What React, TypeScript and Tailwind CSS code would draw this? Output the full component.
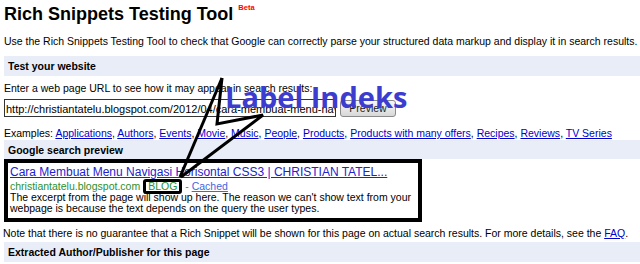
import React from 'react';

const examples = [
  'Applications',
  'Authors',
  'Events',
  'Movie',
  'Music',
  'People',
  'Products',
  'Products with many offers',
  'Recipes',
  'Reviews',
  'TV Series',
];

function SectionHeader({ children, className = '' }: { children: React.ReactNode; className?: string }) {
  return (
    <div className={`ml-[4px] h-[20px] bg-[#e8edf8] pl-[4px] text-[10.5px] font-bold leading-[20px] text-black ${className}`}>
      {children}
    </div>
  );
}

export default function App() {
  return (
    <div className="relative h-[264px] w-[640px] overflow-hidden bg-white font-['Liberation_Sans',Arial,sans-serif] text-black">
      <div className="h-[34px] pl-[4px] pt-[2px] text-[18px] font-bold leading-[24px]">
        Rich Snippets Testing Tool
        <span className="ml-[5px] align-top text-[7.5px] font-bold leading-[12px] text-[#ff0000]">Beta</span>
      </div>
      <div className="h-[14px] whitespace-nowrap pl-[4px] text-[10.5px] leading-[14px]">
        Use the Rich Snippets Testing Tool to check that Google can correctly parse your structured data markup and
        display it in search results.
      </div>

      <SectionHeader className="mt-[8px]">Test your website</SectionHeader>

      <div className="mt-[5px] h-[14px] pl-[4px] text-[10.5px] leading-[14px]">
        Enter a web page URL to see how it may appear in search results:
      </div>

      <div className="mt-[4px] flex h-[18px] items-start gap-[4px] pl-[4px]">
        <div className="h-[18px] w-[332px] overflow-hidden whitespace-nowrap border border-[#333] pl-[1px] pt-[2px] text-[11px] leading-[14px]">
          http://christiantatelu.blogspot.com/2012/04/cara-membuat-menu-navigasi-horisontal-css3.html
        </div>
        <div className="mt-[1px] h-[17px] w-[56px] rounded-[3px] border border-[#8a8a8a] bg-linear-to-b from-[#f8f8f8] to-[#d8d8d8] text-center text-[10.5px] leading-[15px] text-[#222]">
          Preview
        </div>
      </div>

      <div className="mt-[10px] h-[13px] whitespace-nowrap pl-[4px] text-[10.5px] leading-[13px]">
        Examples:{' '}
        {examples.map((ex, i) => (
          <React.Fragment key={ex}>
            <span className="text-[#0000cc] underline">{ex}</span>
            {i < examples.length - 1 && ', '}
          </React.Fragment>
        ))}
      </div>

      <SectionHeader className="!h-[19px]">Google search preview</SectionHeader>

      <div className="ml-[4px] h-[63px] w-[418px] border-[4px] border-black pl-[2px] pt-[2px]">
        <div className="h-[15px] whitespace-nowrap text-[12px] leading-[15px] text-[#2222cc] underline">
          Cara Membuat Menu Navigasi Horisontal CSS3 | CHRISTIAN TATEL...
        </div>
        <div className="flex h-[12px] items-start whitespace-nowrap text-[10.5px] leading-[12px]">
          <span className="text-[#2d8f2d]">christiantatelu.blogspot.com</span>
          <span className="ml-[3px] -mt-[1px] inline-block h-[15px] rounded-[3px] border-[3px] border-black px-[2px] leading-[9px] text-[#2d8f2d]">
            BLOG
          </span>
          <span className="text-[#777]">&nbsp;-&nbsp;</span>
          <span className="text-[#4466dd] underline">Cached</span>
        </div>
        <div className="text-[10.5px] leading-[11px]">
          The excerpt from the page will show up here. The reason we can't show text from your
          <br />
          webpage is because the text depends on the query the user types.
        </div>
      </div>

      <div className="mt-[4px] h-[14px] whitespace-nowrap pl-[3px] text-[10.5px] leading-[14px]">
        Note that there is no guarantee that a Rich Snippet will be shown for this page on actual search results. For
        more details, see the <span className="text-[#0000cc] underline">FAQ</span>.
      </div>

      <SectionHeader className="mt-[2px]">Extracted Author/Publisher for this page</SectionHeader>

      {/* annotation drawn over the screenshot */}
      <svg className="pointer-events-none absolute left-0 top-0" width="640" height="264" viewBox="0 0 640 264">
        <polyline
          points="222,78 217,124 263,115 181,177"
          fill="none"
          stroke="black"
          strokeWidth="3"
          strokeLinejoin="miter"
        />
        <line x1="222" y1="78" x2="180" y2="177" stroke="black" strokeWidth="3" />
      </svg>
      <div className="pointer-events-none absolute left-[225px] top-[82px] whitespace-nowrap font-['Open_Sans',sans-serif] text-[29px] font-bold leading-[29px] text-[#3c3ccf]">
        Label Indeks
      </div>
    </div>
  );
}
